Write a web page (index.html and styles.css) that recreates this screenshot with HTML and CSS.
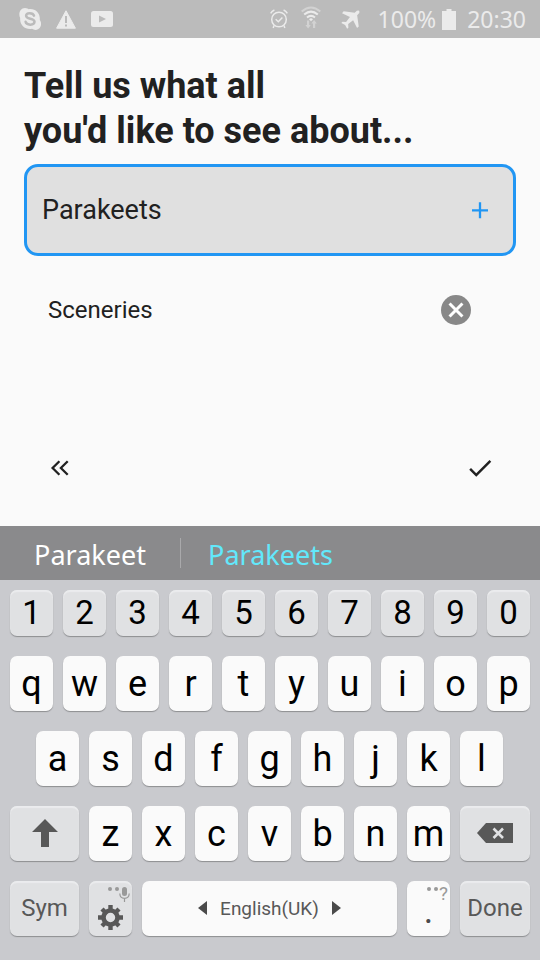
FILE: index.html
```html
<!DOCTYPE html>
<html lang="en">
<head>
<meta charset="utf-8">
<meta name="viewport" content="width=device-width, initial-scale=1">
<title>Your interests</title>
<link rel="stylesheet" href="styles.css">
</head>
<body>
<header class="status">
  <div class="status-left">
    <svg width="22" height="22" viewBox="0 0 22 22"><path fill="#ebebeb" d="M6 0C8 0 9 .8 9.600 1.200C16 0 21.500 5 20.800 12C22.500 14 22.500 17.500 21 19.500C19 22.300 15.500 22.500 13 20.800C6 22 .500 17 1.200 10C-1 6 1 0 6 0Z"/><path fill="none" stroke="#bbb" stroke-width="2.500" stroke-linecap="round" d="M15 7.600C14 4.500 7.200 4.100 7.100 7.800C7 11.700 15.700 9.800 15.500 13.800C15.300 17.800 7.300 17.400 6.600 13.800"/></svg>
    <svg width="20" height="19" viewBox="0 0 20 19"><path fill="#ebebeb" stroke="#ebebeb" stroke-width="1" stroke-linejoin="round" d="M10 .8L19.400 18.200H.6Z"/><path fill="#bbb" d="M9 6h2v7H9zM9 14.500h2v2H9z"/></svg>
    <svg width="22" height="16" viewBox="0 0 22 16"><rect width="22" height="16" rx="2.500" fill="#ebebeb"/><path fill="#bbb" d="M8 4.500L15 8L8 11.500Z"/></svg>
  </div>
  <div class="status-right">
    <svg width="18" height="20" viewBox="0 0 18 20" fill="none" stroke="#ebebeb" stroke-width="1.500"><circle cx="9" cy="10.500" r="7.300"/><path d="M5.700 10.300L8.300 12.800L12.400 8.500M.6 4.400Q2 1.900 4.400 1M17.400 4.400Q16 1.900 13.600 1M4 16.500L3.200 19M14 16.500L14.800 19"/></svg>
    <svg class="wifi" width="20" height="23" viewBox="0 0 20 23" fill="none" stroke="#ebebeb" stroke-width="2"><path stroke="#d2d2d2" d="M.7 5.500Q10-2.500 19.300 5.500"/><path d="M3.200 8.600Q10 2.600 16.800 8.600M6 11.500Q10 8.200 14 11.500"/><path fill="#ebebeb" stroke="none" d="M8 13.200Q10 11.500 12 13.200L10 15.300Z"/><path fill="#d2d2d2" stroke="none" d="M6 14.500h2.200v4.500h1.600L7.100 22.500L4.400 19H6zM12 22v-4.500h-1.600L13.100 14l2.700 3.500h-1.600V22z"/></svg>
    <svg class="plane" width="19" height="19" viewBox="0 0 18 18"><path fill="#ebebeb" d="M13 2.500L15 .8Q18-.6 17.300 2.800L15.300 5L16.800 15.600L15.200 17L11.500 9.600L6.800 13.200L7 16.700L5.800 17.700L3.900 14.200L.3 12.300L1.400 11.200L4.800 11.300L8.500 6.600L1 3L2.500 1.300Z"/></svg>
    <span>100%</span>
    <svg class="battery" width="14" height="21" viewBox="0 0 14 21"><path fill="#ebebeb" d="M4.500 0h5v2H14v19H0V2h4.500z"/></svg>
    <time>20:30</time>
  </div>
</header>
<main class="content">
  <h1>Tell us what all<br>you'd like to see about...</h1>
  <form class="field">
    <input type="text" value="Parakeets" aria-label="Topic">
    <button type="button" class="icon-button" aria-label="Add"><svg width="28" height="28" viewBox="0 0 28 28"><path stroke="#2196f3" stroke-width="2.300" d="M6 14.300H22M14 6.300V22.300"/></svg></button>
  </form>
  <ul class="topics">
    <li><span>Sceneries</span><button type="button" class="icon-button" aria-label="Remove Sceneries"><svg width="36" height="36" viewBox="0 0 24 24"><circle cx="12" cy="12" r="10" fill="#888"/><path stroke="#fff" stroke-width="2" d="M7.700 7.700L16.300 16.300M16.300 7.700L7.700 16.300"/></svg></button></li>
  </ul>
  <nav class="actions">
    <button type="button" class="icon-button" aria-label="Back"><svg width="30" height="30" viewBox="0 0 30 30" fill="none" stroke="#212121" stroke-width="2.300"><path d="M14.400 8.200L7.600 15L14.400 21.800M22.700 8.200L15.900 15L22.700 21.800"/></svg></button>
    <button type="button" class="icon-button" aria-label="Done"><svg width="30" height="30" viewBox="0 0 24 24"><path fill="#212121" d="M9 16.200L4.800 12l-1.400 1.400L9 19 21 7l-1.400-1.400z"/></svg></button>
  </nav>
</main>
<section class="suggestions" aria-label="Suggestions">
  <button type="button">Parakeet</button>
  <button type="button" class="active">Parakeets</button>
</section>
<section class="keyboard" aria-label="Keyboard">
  <div class="row digits">
    <button class="key gray">1</button><button class="key gray">2</button><button class="key gray">3</button><button class="key gray">4</button><button class="key gray">5</button><button class="key gray">6</button><button class="key gray">7</button><button class="key gray">8</button><button class="key gray">9</button><button class="key gray">0</button>
  </div>
  <div class="row">
    <button class="key">q</button><button class="key">w</button><button class="key">e</button><button class="key">r</button><button class="key">t</button><button class="key">y</button><button class="key">u</button><button class="key">i</button><button class="key">o</button><button class="key">p</button>
  </div>
  <div class="row inset">
    <button class="key">a</button><button class="key">s</button><button class="key">d</button><button class="key">f</button><button class="key">g</button><button class="key">h</button><button class="key">j</button><button class="key">k</button><button class="key">l</button>
  </div>
  <div class="row">
    <button class="key gray wide-start label" aria-label="Shift"><svg width="26" height="28" viewBox="0 0 26 28"><path fill="#585858" d="M13 0L26 13H17V28H9V13H0Z"/></svg></button>
    <button class="key">z</button><button class="key">x</button><button class="key">c</button><button class="key">v</button><button class="key">b</button><button class="key">n</button><button class="key">m</button>
    <button class="key gray wide-end label" aria-label="Backspace"><svg width="36" height="20" viewBox="0 0 36 20"><path fill="#585858" d="M9 0H36V20H9L0 10Z"/><path stroke="#e0e1e3" stroke-width="2.600" d="M16.500 5.500L26 15M26 5.500L16.500 15"/></svg></button>
  </div>
  <div class="row">
    <button class="key gray wide-start label">Sym</button>
    <button class="key gray" aria-label="Keyboard settings"><svg width="43" height="55" viewBox="0 0 43 55"><g fill="#999"><circle cx="21" cy="8" r="2"/><circle cx="28" cy="8" r="2"/><rect x="33" y="6" width="5" height="9" rx="2.500"/></g><path fill="none" stroke="#999" stroke-width="1.200" d="M30.800 12.500C31 19 40 19 40.200 12.500M35.500 17.300V21"/><g transform="translate(21.500 36.500)"><g stroke="#585858" stroke-width="4.400"><path d="M0-12.500V-7M0 12.500V7M-12.500 0H-7M12.500 0H7M-8.500-8.500L-5-5M8.500 8.500L5 5M-8.500 8.500L-5 5M8.500-8.500L5-5"/></g><circle r="7" fill="none" stroke="#585858" stroke-width="4.600"/></g></svg></button>
    <button class="key space"><svg width="9" height="14" viewBox="0 0 9 14"><path fill="#4a4a4a" d="M9 0V14L0 7Z"/></svg><span>English(UK)</span><svg width="9" height="14" viewBox="0 0 9 14"><path fill="#4a4a4a" d="M0 0V14L9 7Z"/></svg></button>
    <button class="key period"><span class="hint"><svg width="11" height="4" viewBox="0 0 11 4" fill="#999"><circle cx="2" cy="2" r="2"/><circle cx="9" cy="2" r="2"/></svg><span>?</span></span>.</button>
    <button class="key gray wide-end label">Done</button>
  </div>
</section>
</body>
</html>
```
FILE: styles.css
```css
* { box-sizing: border-box; }
body {
  margin: 0;
  min-height: 100vh;
  display: flex;
  flex-direction: column;
  background: #fafafa;
  color: #212121;
  font-family: Roboto, "Liberation Sans", sans-serif;
}
button, input { font: inherit; color: inherit; }
button { border: 0; padding: 0; background: none; }
svg { display: block; flex: none; }

.status {
  height: 38px;
  padding: 0 14px 0 19px;
  display: flex;
  align-items: center;
  justify-content: space-between;
  background: #bbb;
  color: #ebebeb;
  font: 23px/38px "Noto Sans", sans-serif;
}
.status-left, .status-right { display: flex; align-items: center; }
.status-left { gap: 15px; }
.wifi { margin: 0 20px 4px 13px; }
.plane { margin-right: 18px; }
.battery { margin: 0 11px 0 6px; }

.content {
  flex: 1;
  display: flex;
  flex-direction: column;
  padding: 26px 24px 34px;
}
h1 { margin: 0 0 10px; font-size: 36px; line-height: 45px; font-weight: 700; }
.field {
  display: flex;
  align-items: center;
  height: 92px;
  padding: 0 9px 0 15px;
  border: 3px solid #2196f3;
  border-radius: 14px;
  background: #e0e0e0;
}
.field input {
  flex: 1;
  min-width: 0;
  padding: 0;
  border: 0;
  outline: 0;
  background: none;
  font-size: 27px;
}
.icon-button {
  width: 48px;
  height: 48px;
  display: flex;
  align-items: center;
  justify-content: center;
}
.topics { margin: 30px 0 0; padding: 0 36px 0 24px; list-style: none; font-size: 24px; }
.topics li { display: flex; align-items: center; justify-content: space-between; }
.actions { margin-top: auto; padding: 0 12px; display: flex; justify-content: space-between; }

.suggestions {
  height: 54px;
  display: grid;
  grid-template-columns: repeat(3, 1fr);
  align-items: center;
  background: #8a8a8c;
  color: #fff;
  font: 27px/30px "Noto Sans", sans-serif;
}
.suggestions button { padding-top: 4px; height: 30px; line-height: 26px; }
.suggestions .active { border-left: 1px solid #a9a9ab; color: #62e8fb; }

.keyboard {
  display: flex;
  flex-direction: column;
  gap: 20px;
  padding: 10px 10px 24px;
  background: #c9cace;
}
.row { display: flex; gap: 10px; }
.inset { padding: 0 27px 0 26px; }
.key {
  position: relative;
  flex: 86 1 0;
  min-width: 0;
  height: 55px;
  display: flex;
  align-items: center;
  justify-content: center;
  border-radius: 7px;
  background: #fafafa;
  box-shadow: 0 1px 1px #8d8e91;
  color: #000;
  font-size: 36px;
}
.digits .key { height: 46px; padding-bottom: 1px; font-size: 33px; }
.gray { background: #e0e1e3; box-shadow: 0 1px 1px #8d8e91, inset 0 2px 1px #ebecee; }
.wide-start { flex-grow: 138; }
.wide-end { flex-grow: 140; }
.label { padding-bottom: 1px; color: #585858; font-size: 24px; }
.space { flex-grow: 510; gap: 13px; padding-bottom: 1px; color: #585858; font-size: 19px; }
.period { padding-top: 4px; color: #4a4a4a; }
.hint {
  position: absolute;
  top: 3px;
  right: 2px;
  display: flex;
  gap: 1px;
  color: #999;
  font-size: 19px;
  line-height: 20px;
}
.hint svg { margin-top: 3px; }
```
